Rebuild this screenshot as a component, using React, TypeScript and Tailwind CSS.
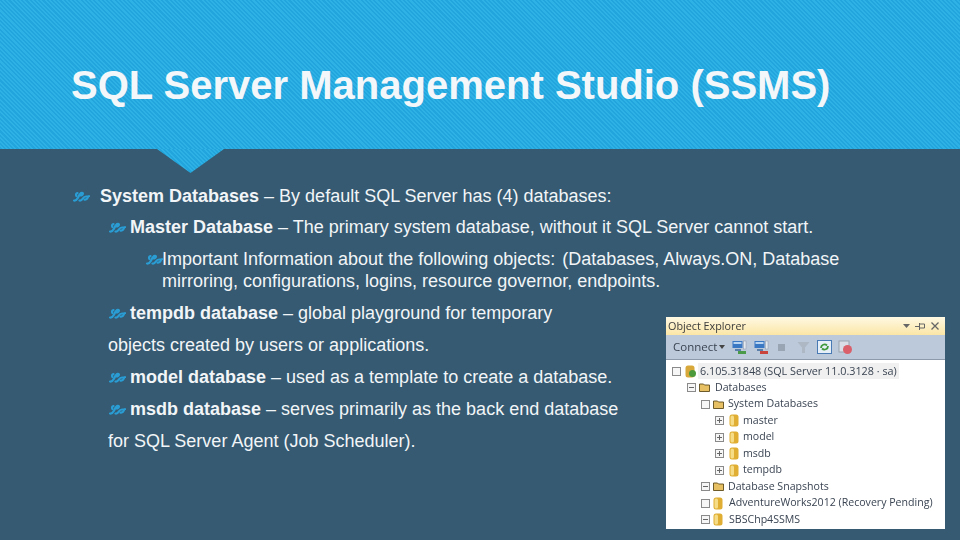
const stripes =
  "bg-[repeating-linear-gradient(45deg,#22a5dc_0px,#22a5dc_1.5px,#2eb1e5_1.5px,#2eb1e5_3px)]";

function Ornament() {
  return (
    <svg width="17" height="11" viewBox="0 0 17 11" className="shrink-0" fill="none" stroke="#2a9dd4" strokeWidth="2.200" strokeLinecap="round">
      <path d="M1 9.500C3 9.800 4 8.500 4.800 7C5.600 5 6.500 2.800 8 2C9.300 1.400 10.200 2 9.800 3.200C9.400 4.300 8.200 4.600 7.300 4.200" />
      <path d="M3.400 5C2.600 3.600 3 2.200 4.500 2.100" />
      <path d="M6.500 9.500C8 9.800 9 8.800 9.800 7.500C10.600 6.200 12 5.400 13.500 5.500C14.600 5.500 15.400 5.600 16 5.200" />
      <path d="M11.500 8.600C13 8.800 14.200 8 14.800 6.600" />
    </svg>
  );
}

function Line({ level, bold, children, gap, className }: { level: number; bold: string; children: React.ReactNode; gap: string; className?: string }) {
  return (
    <p className={`flex items-center ${gap} ${level === 0 ? "ml-[73px]" : "ml-[109px]"} ${className ?? ""}`}>
      <Ornament />
      <span>
        <span className="font-bold">{bold}</span>
        {children}
      </span>
    </p>
  );
}

function Db() {
  return (
    <svg width="10" height="13" viewBox="0 0 10 13" className="shrink-0">
      <rect x="0.500" y="0.500" width="9" height="12" rx="2.500" fill="#dfae32" />
      <rect x="1.500" y="1.500" width="3.500" height="10" rx="1.500" fill="#f6dc86" />
    </svg>
  );
}

function Folder() {
  return (
    <svg width="11" height="9" viewBox="0 0 11 9" className="shrink-0">
      <path d="M0.500 1h4l1 1h5v6.500h-10z" fill="#e6c062" stroke="#5f4c1c" strokeWidth="0.900" />
    </svg>
  );
}

function Box({ mark }: { mark?: "plus" | "minus" }) {
  return (
    <span className="relative h-[9px] w-[9px] shrink-0 border border-[#8a8a8a] bg-[#f6f6f6]">
      {mark && <span className="absolute left-[1px] top-[3px] h-px w-[5px] bg-[#666]" />}
      {mark === "plus" && <span className="absolute left-[3px] top-[1px] h-[5px] w-px bg-[#666]" />}
    </span>
  );
}

function Row({ indent, children }: { indent: string; children: React.ReactNode }) {
  return <div className={`flex h-[16.5px] items-center whitespace-nowrap ${indent}`}>{children}</div>;
}

function ToolIcon({ badge }: { badge: string }) {
  return (
    <svg width="15" height="15" viewBox="0 0 15 15" className="shrink-0">
      <rect x="0.500" y="1" width="10" height="7" fill="#3b78c4" />
      <rect x="1.500" y="2" width="8" height="2" fill="#b8d4f0" />
      <rect x="3" y="9" width="6" height="2" fill="#5a7fa8" />
      <rect x="11.500" y="1" width="2.500" height="8" fill="#e4e9f0" stroke="#8a97a8" strokeWidth="0.500" />
      <rect x="6" y="11" width="8" height="3" fill={badge} />
    </svg>
  );
}

function ObjectExplorer() {
  return (
    <div className="absolute left-[666px] top-[317px] h-[212px] w-[279px] overflow-hidden bg-white font-['Open_Sans',sans-serif] text-[10.600px] text-[#3a4452] blur-[0.3px]">
      <div className="flex h-[18px] items-center justify-between bg-[linear-gradient(#fff9e4,#fbe6a6)] pl-[2px] pr-[6px] text-[10.800px] text-[#3a3a3a]">
        <span>Object Explorer</span>
        <span className="flex items-center gap-[5px]">
          <svg width="7" height="4" viewBox="0 0 7 4"><path d="M0 0h7L3.500 4z" fill="#666" /></svg>
          <svg width="11" height="9" viewBox="0 0 11 9" fill="none" stroke="#666"><path d="M0 4.500h4M4.500 1v7M4.500 2h5v4h-5" /></svg>
          <svg width="8" height="8" viewBox="0 0 8 8" stroke="#666" strokeWidth="1.300"><path d="M0.500 0.500l7 7M7.500 0.500l-7 7" /></svg>
        </span>
      </div>
      <div className="flex h-[25px] items-center border-b border-[#8d9aab] bg-[#bcc9da] pl-[7px] text-[11.500px]">
        <span>Connect</span>
        <svg width="6" height="4" viewBox="0 0 6 4" className="ml-[2px] mr-[7px]"><path d="M0 0h6L3 4z" fill="#444" /></svg>
        <div className="flex items-center">
          <ToolIcon badge="#4a9a4a" />
          <span className="ml-[7px]"><ToolIcon badge="#c9443c" /></span>
          <span className="ml-[9px] h-[7px] w-[7px] bg-[#9aa5b4]" />
          <svg width="13" height="13" viewBox="0 0 13 13" className="ml-[12px]"><path d="M0.500 1h12L8 6.500V12H5V6.500z" fill="#aeb8c5" /></svg>
          <svg width="15" height="14" viewBox="0 0 15 14" className="ml-[7px]"><rect x="0.500" y="0.500" width="14" height="13" fill="#e6eef8" stroke="#4a7ab4" /><path d="M4 8a3.500 3.500 0 0 1 6-2.500M11 6a3.500 3.500 0 0 1-6 2.500" stroke="#3f9a3c" strokeWidth="1.800" fill="none" /></svg>
          <svg width="15" height="15" viewBox="0 0 15 15" className="ml-[6px]"><rect x="1" y="1" width="10" height="11" fill="#d9dee6" stroke="#9aa3b0" /><circle cx="9.500" cy="9.500" r="4.500" fill="#d9606a" /></svg>
        </div>
      </div>
      <div className="pt-[3px]">
        <Row indent="pl-[6px]">
          <Box />
          <svg width="12" height="13" viewBox="0 0 12 13" className="ml-[4px] shrink-0"><rect x="0.500" y="0.500" width="9" height="12" rx="2.500" fill="#d8a93a" /><circle cx="7.500" cy="8.500" r="3.500" fill="#4c9a3c" /></svg>
          <span className="ml-[1px] bg-[#f0f0f0] px-[2px] text-[10.800px]">6.105.31848 (SQL Server 11.0.3128 · sa)</span>
        </Row>
        <Row indent="pl-[21px]">
          <Box mark="minus" />
          <span className="ml-[3px]"><Folder /></span>
          <span className="ml-[5px]">Databases</span>
        </Row>
        <Row indent="pl-[35px]">
          <Box />
          <span className="ml-[3px]"><Folder /></span>
          <span className="ml-[4px]">System Databases</span>
        </Row>
        {["master", "model", "msdb", "tempdb"].map((name) => (
          <Row key={name} indent="pl-[49px]">
            <Box mark="plus" />
            <span className="ml-[5px]"><Db /></span>
            <span className="ml-[4px]">{name}</span>
          </Row>
        ))}
        <Row indent="pl-[35px]">
          <Box mark="minus" />
          <span className="ml-[3px]"><Folder /></span>
          <span className="ml-[4px]">Database Snapshots</span>
        </Row>
        <Row indent="pl-[35px]">
          <Box />
          <span className="ml-[3px]"><Db /></span>
          <span className="ml-[6px]">AdventureWorks2012 (Recovery Pending)</span>
        </Row>
        <Row indent="pl-[35px]">
          <Box mark="minus" />
          <span className="ml-[3px]"><Db /></span>
          <span className="ml-[6px]">SBSChp4SSMS</span>
        </Row>
      </div>
    </div>
  );
}

export default function App() {
  return (
    <div className="relative h-[540px] w-[960px] overflow-hidden bg-[#355a72] font-['Liberation_Sans',Arial,sans-serif] text-white">
      <header className={`flex h-[149px] items-start pl-[71px] pt-[58px] ${stripes}`}>
        <h1 className="text-[40px] font-bold leading-[54px] text-[#f4f7f9]">
          SQL Server Management Studio (SSMS)
        </h1>
      </header>
      <div className={`absolute left-[157px] top-[149px] h-[24px] w-[67px] ${stripes} [clip-path:polygon(0_0,100%_0,50%_100%)]`} />

      <main className="flex flex-col gap-[10px] pt-[36px] text-[18px] leading-[22px] text-[#f2f5f7]">
        <Line level={0} bold="System Databases" gap="gap-[10px]" className="-mb-[1px]"> – By default SQL Server has (4) databases:</Line>
        <Line level={1} bold="Master Database" gap="gap-[4px]"> – The primary system database, without it SQL Server cannot start.</Line>
        <div className="relative ml-[162px]">
          <span className="absolute -left-[16px] top-[6px]"><Ornament /></span>
          Important Information about the following objects: <span className="pl-[2px]">(Databases, Always.ON, Database</span><br />
          mirroring, configurations, logins, resource governor, endpoints.
        </div>
        <Line level={1} bold="tempdb database" gap="gap-[4px]"> – global playground for temporary</Line>
        <p className="ml-[108px]">objects created by users or applications.</p>
        <Line level={1} bold="model database" gap="gap-[4px]"> – used as a template to create a database.</Line>
        <Line level={1} bold="msdb database" gap="gap-[4px]"> – serves primarily as the back end database</Line>
        <p className="ml-[108px]">for SQL Server Agent (Job Scheduler).</p>
      </main>

      <ObjectExplorer />
    </div>
  );
}
